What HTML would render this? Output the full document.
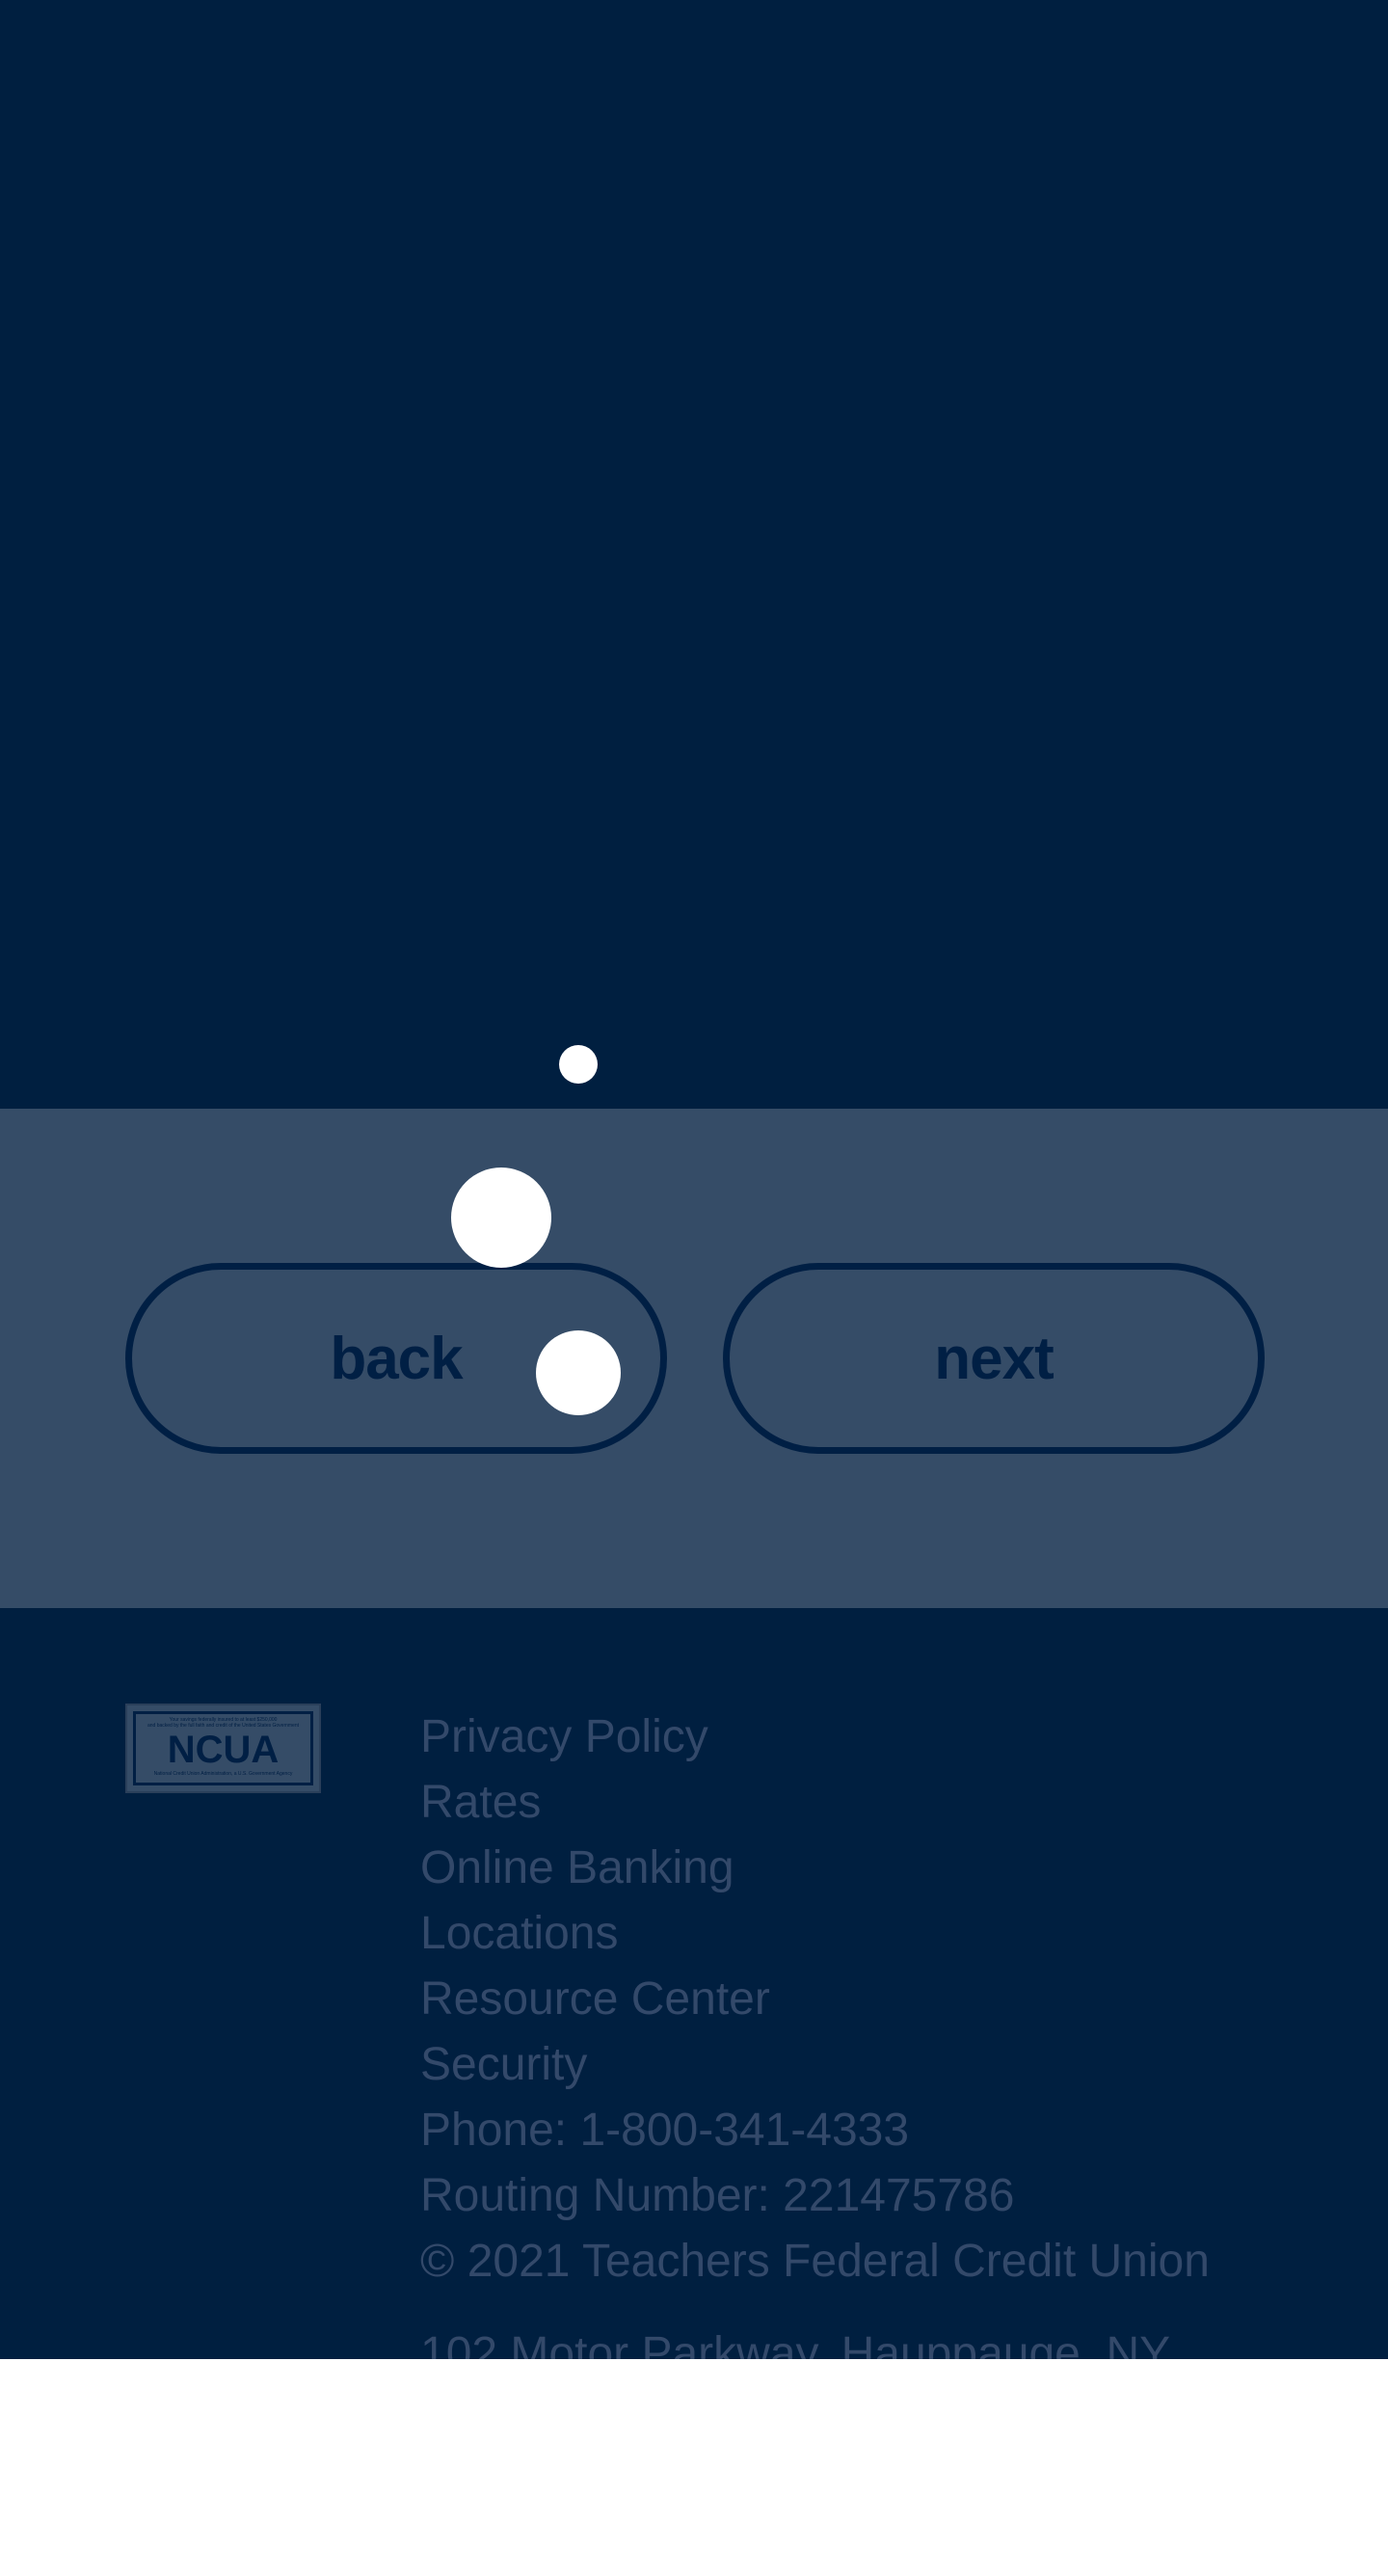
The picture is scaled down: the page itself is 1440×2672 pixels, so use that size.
<!DOCTYPE html>
<html><head><style>
*{margin:0;padding:0;box-sizing:border-box}
body{width:1440px;height:2672px;background:#fff;font-family:"Liberation Sans",sans-serif;position:relative;overflow:hidden}
.top{position:absolute;left:0;top:0;width:1440px;height:1150px;background:#001f40}
.band{position:absolute;left:0;top:1150px;width:1440px;height:518px;background:#354c67}
.foot{position:absolute;left:0;top:1668px;width:1440px;height:779px;background:#001f40;overflow:hidden}
.dot{position:absolute;background:#fff;border-radius:50%}
.btn{position:absolute;top:1310px;width:562px;height:198px;border:7px solid #001f44;border-radius:99px;color:#001f44;font-size:62px;font-weight:bold;display:flex;align-items:center;justify-content:center;letter-spacing:-1px}
.links{position:absolute;left:436px;top:100px;color:#33496a;font-size:48px;line-height:68px}
.ncua{position:absolute;left:130px;top:99px;width:203px;height:93px;background:#354c67;border:2px solid #2a3f5a}
.ncua .in{position:absolute;left:6px;top:6px;right:6px;bottom:6px;border:3px solid #001f44;text-align:center;color:#001f44}
</style></head><body>
<div class="top"></div>
<div class="band"></div>
<div class="dot" style="left:580px;top:1084px;width:40px;height:40px"></div>
<div class="btn" style="left:130px"><span style="margin-right:0px">back</span></div>
<div class="btn" style="left:750px">next</div>
<div class="dot" style="left:468px;top:1211px;width:104px;height:104px"></div>
<div class="dot" style="left:556px;top:1380px;width:88px;height:88px"></div>
<div class="foot">
<div class="ncua"><div class="in"><div style="font-size:5px;margin-top:3px;line-height:6px">Your savings federally insured to at least $250,000<br>and backed by the full faith and credit of the United States Government</div><div style="font-size:40px;font-weight:bold;line-height:44px">NCUA</div><div style="font-size:5px">National Credit Union Administration, a U.S. Government Agency</div></div></div>
<div class="links">Privacy Policy<br>Rates<br>Online Banking<br>Locations<br>Resource Center<br>Security<br>Phone: 1-800-341-4333<br>Routing Number: 221475786<br>© 2021 Teachers Federal Credit Union<br><div style="margin-top:28px">102 Motor Parkway, Hauppauge, NY</div></div>
</div>
</body></html>
